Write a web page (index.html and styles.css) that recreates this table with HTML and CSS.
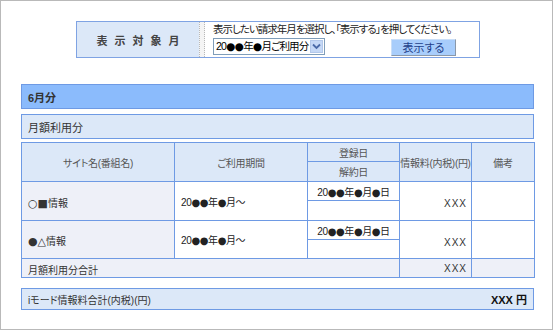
FILE: index.html
```html
<!DOCTYPE html>
<html lang="ja">
<head>
<meta charset="utf-8">
<title>iモード情報料</title>
<link rel="stylesheet" href="styles.css">
</head>
<body>
<div class="frame">
  <div class="selector">
    <div class="sel-label"><span>表示対象月</span></div>
    <div class="sel-sep"></div>
    <div class="sel-body">
      <p class="sel-note">表示したい請求年月を選択し、「表示する」を押してください。</p>
      <div class="sel-controls">
        <div class="dropdown">
          <span class="dropdown-text">20<span class="sym">●●</span>年<span class="sym">●</span>月ご利用分</span>
          <span class="dropdown-arrow"><svg width="9" height="7" viewBox="0 0 9 7"><path d="M1 1.5 L4.5 5 L8 1.5" fill="none" stroke="#4a6aa8" stroke-width="1.8"/></svg></span>
        </div>
        <button class="show-btn" type="button">表示する</button>
      </div>
    </div>
  </div>

  <div class="month-bar">6月分</div>
  <div class="section-bar">月額利用分</div>

  <table class="usage">
    <colgroup>
      <col class="c-name"><col class="c-period"><col class="c-date"><col class="c-fee"><col class="c-note">
    </colgroup>
    <tr class="h1">
      <th rowspan="2">サイト名(番組名)</th>
      <th rowspan="2">ご利用期間</th>
      <th>登録日</th>
      <th rowspan="2">情報料(内税)(円)</th>
      <th rowspan="2">備考</th>
    </tr>
    <tr class="h2">
      <th>解約日</th>
    </tr>
    <tr class="d1">
      <td rowspan="2" class="name"><span class="sym sym-lg">○■</span>情報</td>
      <td rowspan="2" class="period">20<span class="sym">●●</span>年<span class="sym">●</span>月～</td>
      <td class="date">20<span class="sym">●●</span>年<span class="sym">●</span>月<span class="sym">●</span>日</td>
      <td rowspan="2" class="fee">XXX</td>
      <td rowspan="2" class="note"></td>
    </tr>
    <tr class="d2">
      <td class="date"></td>
    </tr>
    <tr class="d1">
      <td rowspan="2" class="name"><span class="sym sym-lg">●△</span>情報</td>
      <td rowspan="2" class="period">20<span class="sym">●●</span>年<span class="sym">●</span>月～</td>
      <td class="date">20<span class="sym">●●</span>年<span class="sym">●</span>月<span class="sym">●</span>日</td>
      <td rowspan="2" class="fee">XXX</td>
      <td rowspan="2" class="note"></td>
    </tr>
    <tr class="d3">
      <td class="date"></td>
    </tr>
    <tr class="total">
      <td colspan="3" class="name">月額利用分合計</td>
      <td class="fee-total">XXX</td>
      <td></td>
    </tr>
  </table>

  <div class="grand-total">
    <span>iモード情報料合計(内税)(円)</span>
    <span class="grand-value">XXX 円</span>
  </div>
</div>
</body>
</html>
```

FILE: styles.css
```css
* { box-sizing: border-box; }

body {
  margin: 0;
  background: #ffffff;
  font-family: "Liberation Sans", "Noto Sans CJK JP", sans-serif;
  color: #333333;
  font-feature-settings: "palt";
}

.sym {
  font-family: "DejaVu Sans", "Noto Sans CJK JP", sans-serif;
  letter-spacing: -0.5px;
}
.sym-lg {
  font-size: 11px;
  letter-spacing: 0;
}

.frame {
  width: 553px;
  height: 330px;
  border: 1px solid #b9b9b9;
  padding: 20px 18px 0 20px;
}

/* selector box */
.selector {
  display: flex;
  width: 404px;
  height: 37px;
  margin-left: 55px;
  border: 1px solid #7fa3e3;
}

.sel-label {
  width: 122px;
  background: #dce8f8;
  display: flex;
  align-items: center;
  justify-content: center;
  font-size: 11px;
  font-weight: bold;
  color: #444444;
}
.sel-label span {
  letter-spacing: 7px;
  margin-right: -7px;
}

.sel-sep {
  width: 6px;
  border-left: 1px dotted #b8b8b8;
  border-right: 1px dotted #b8b8b8;
  background: #f4f4f4;
}

.sel-body {
  flex: 1;
  padding: 0 0 0 8px;
  background: #ffffff;
}

.sel-note {
  margin: 0;
  font-size: 10.5px;
  line-height: 15px;
  letter-spacing: -1px;
  white-space: nowrap;
  color: #222222;
}

.sel-controls {
  display: flex;
  align-items: flex-start;
  margin-top: 1px;
}

.dropdown {
  display: flex;
  align-items: center;
  width: 112px;
  height: 17px;
  border: 1px solid #7f9db9;
  background: #ffffff;
  padding: 1px;
}
.dropdown-text {
  flex: 1;
  font-size: 10.5px;
  line-height: 13px;
  letter-spacing: -0.9px;
  white-space: nowrap;
  overflow: hidden;
  color: #000000;
  padding-left: 1px;
}
.dropdown-arrow {
  flex: none;
  width: 13px;
  height: 13px;
  background: #c5d8f6;
  border: 1px solid #b3c8ea;
  display: flex;
  align-items: center;
  justify-content: center;
}

.show-btn {
  margin: 1px 0 0 66px;
  width: 65px;
  height: 17px;
  padding: 0;
  background: #a8cdfb;
  border: 1px solid #c9def8;
  border-right-color: #8b98a8;
  border-bottom-color: #8b98a8;
  font-family: inherit;
  font-feature-settings: "palt";
  font-size: 11px;
  line-height: 14px;
  color: #23408a;
}

/* bars */
.month-bar {
  margin-top: 26px;
  height: 25px;
  background: #8bbbfc;
  border: 1px solid #6e9ae4;
  padding-left: 6px;
  display: flex;
  align-items: center;
  font-size: 11px;
  font-weight: bold;
  color: #333333;
}

.section-bar {
  margin-top: 5px;
  height: 25px;
  background: #dce8f8;
  border: 1px solid #6e9ae4;
  padding-left: 6px;
  display: flex;
  align-items: center;
  font-size: 11px;
  color: #333333;
}

/* table */
.usage {
  margin-top: 3px;
  width: 513px;
  border-collapse: collapse;
  table-layout: fixed;
  font-size: 10px;
}
.c-name { width: 153px; }
.c-period { width: 133px; }
.c-date { width: 92px; }
.c-fee { width: 72px; }
.c-note { width: 63px; }

.usage th,
.usage td {
  border: 1px solid #6e9ae4;
  padding: 0;
}

.usage th {
  background: #dce8f8;
  font-weight: normal;
  color: #555555;
  text-align: center;
  letter-spacing: -0.3px;
}

.h1 { height: 19px; }
.h2 { height: 20px; }
.d1 { height: 19px; }
.d2 { height: 20px; }
.d3 { height: 19px; }
.total { height: 19px; }

.usage td {
  background: #ffffff;
  color: #333333;
}

.usage td.name {
  background: #eef0f8;
  padding: 2px 0 0 6px;
}
.usage td.period {
  padding: 0 0 0 6px;
  letter-spacing: -0.3px;
  color: #222222;
}
.usage td.date {
  text-align: center;
  letter-spacing: -0.3px;
  color: #222222;
}
.usage td.fee {
  text-align: right;
  padding: 5px 4px 0 0;
  letter-spacing: 1px;
}
.usage .total td {
  background: #eef0f8;
}
.usage td.fee-total {
  text-align: right;
  padding-right: 4px;
  letter-spacing: 1px;
}

/* grand total */
.grand-total {
  margin-top: 10px;
  height: 22px;
  background: #dce8f8;
  border: 1px solid #6e9ae4;
  padding: 0 6px;
  display: flex;
  align-items: center;
  justify-content: space-between;
  font-size: 10px;
  color: #333333;
}
.grand-value {
  font-weight: bold;
  font-size: 11px;
  color: #111111;
}
```
